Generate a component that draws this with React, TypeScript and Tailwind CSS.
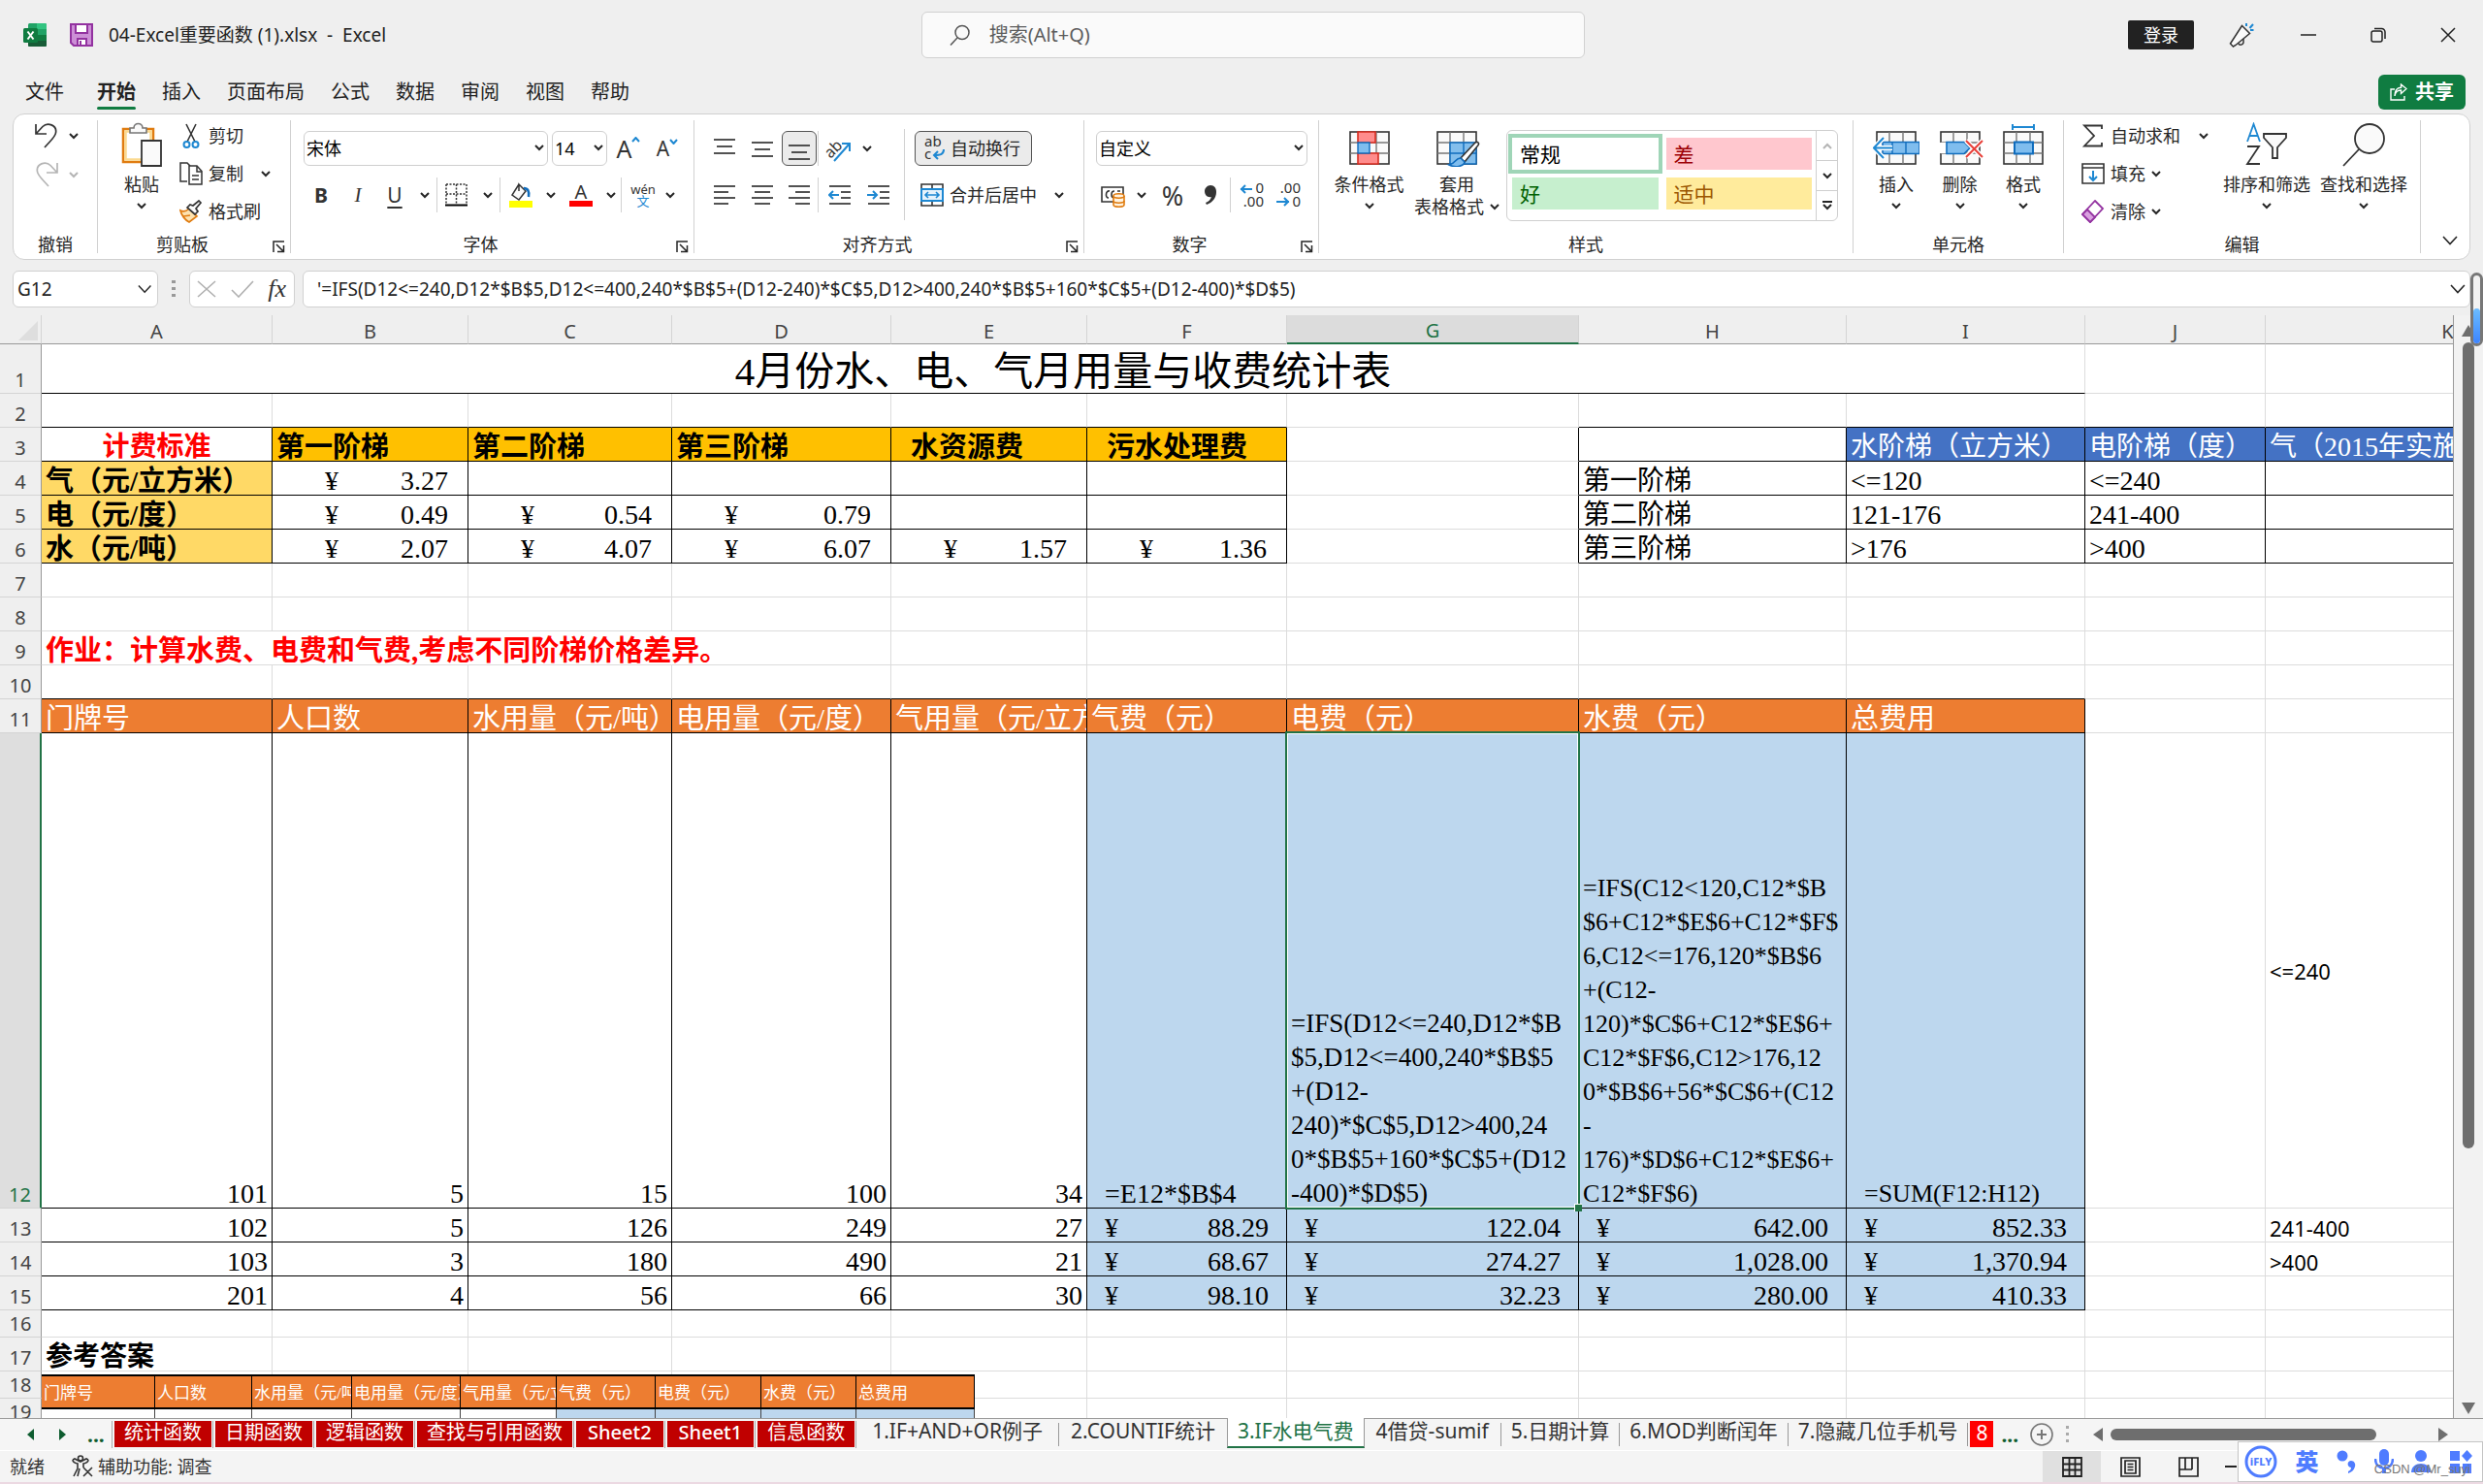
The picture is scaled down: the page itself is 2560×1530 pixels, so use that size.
import React from "react";

const UI = "font-['Noto_Sans','Noto_Sans_CJK_SC',sans-serif]";
const SONG = "font-['Liberation_Serif','Noto_Sans_CJK_SC',serif]";

/* ---------- small shared pieces ---------- */

function Chevron({ big = false, color = "#262626" }: any) {
    return big ? (
        <svg width="16" height="10" viewBox="0 0 16 10" fill="none" stroke={color} strokeWidth="1.6">
            <path d="M1 1l7 7.5L15 1" />
        </svg>
    ) : (
        <svg width="10" height="7" viewBox="0 0 10 7" fill="none" stroke={color} strokeWidth="2">
            <path d="M1 1l4 4 4-4" />
        </svg>
    );
}

function Btn({ label, className = "", children }: any) {
    return (
        <button type="button" aria-label={label} className={`flex items-center justify-center shrink-0 ${className}`}>
            {children}
        </button>
    );
}

function Sep() {
    return <span className="w-px h-9 bg-[#d1d1d1] shrink-0" />;
}

function Select({ label, value, className }: any) {
    return (
        <label className={`relative h-9 shrink-0 ${className}`}>
            <select
                aria-label={label}
                className="appearance-none w-full h-full bg-white border border-[#cfcfcf] rounded-md pl-0.5 text-lg leading-6 text-black"
            >
                <option>{value}</option>
            </select>
            <span className="absolute right-1 top-3.5 pointer-events-none">
                <Chevron />
            </span>
        </label>
    );
}

function Group({ name, launcher = false, className, children }: any) {
    return (
        <section className={`flex flex-col shrink-0 border-r border-[#d1d1d1] ${className}`}>
            <div className="flex-1">{children}</div>
            <div className="flex items-center h-[18px] leading-[18px]">
                <span className="flex-1 text-center">{name}</span>
                {launcher && (
                    <Btn label={`${name}设置`} className="w-6 pt-1">
                        <svg width="13" height="13" viewBox="0 0 13 13" fill="none" stroke="#262626" strokeWidth="1.5">
                            <path d="M1 12V1h11M4 4l7 7M11.5 5v6.5H5" />
                        </svg>
                    </Btn>
                )}
            </div>
        </section>
    );
}

function BigBtn({ icon, text, className }: any) {
    return (
        <button type="button" className={`flex flex-col items-center shrink-0 ${className}`}>
            <span className="h-[52px] flex items-end pb-1">{icon}</span>
            <span className="leading-7 whitespace-nowrap">{text}</span>
            <span className="h-4 flex items-center">
                <Chevron />
            </span>
        </button>
    );
}

// rows of horizontal strokes, each one given as [x1, x2]
function Lines({ rows, gap = 6, top = 1, children }: any) {
    return (
        <svg width="24" height="24" viewBox="0 0 24 24" fill="none" stroke="#333" strokeWidth="1.7">
            {rows.map((r: number[], i: number) => (
                <path key={i} d={`M${r[0]} ${top + i * gap}H${r[1]}`} />
            ))}
            {children}
        </svg>
    );
}

function GridIcon({ children }: any) {
    return (
        <svg width="48" height="44" viewBox="0 0 48 44" fill="none">
            <rect x="4" y="8" width="40" height="33" fill="#fafafa" stroke="#333" strokeWidth="1.6" />
            <path d="M17 8v33M31 8v33M4 19h40M4 30h40" stroke="#777" strokeWidth="1.4" />
            {children}
        </svg>
    );
}

/* ---------- title bar and ribbon ---------- */

function TitleBar() {
    return (
        <header className="flex h-[72px] items-center shrink-0 pl-6 text-[19px]">
            <div className="flex items-center flex-1">
                <svg width="24" height="24" viewBox="0 0 24 24">
                    <rect x="5" y="0" width="19" height="24" rx="1.5" fill="#21a366" />
                    <path d="M14 0h8.500A1.500 1.500 0 0 1 24 1.500V6H14z" fill="#33c481" />
                    <path d="M14 12h10v6H14z" fill="#107c41" />
                    <path d="M5 12h9v6H5z" fill="#185c37" />
                    <path d="M5 18h19v4.500A1.500 1.500 0 0 1 22.500 24h-16A1.500 1.500 0 0 1 5 22.500z" fill="#185c37" />
                    <rect x="0" y="5" width="15" height="15" rx="1.500" fill="#107c41" />
                    <path d="M4.500 8.500l6 8M10.500 8.500l-6 8" stroke="#fff" strokeWidth="2" />
                </svg>
                <svg className="ml-6" width="24" height="24" viewBox="0 0 24 24" stroke="#9332a0" strokeWidth="2">
                    <path d="M1 1h22v22H4l-3-3z" fill="#cc8fd6" />
                    <path d="M6 1h12v9H6zM8 16h9v7H8z" fill="#fff" />
                    <path d="M11 18v5" />
                </svg>
                <h1 className="ml-4 whitespace-pre text-[#222]">{"04-Excel重要函数 (1).xlsx  -  Excel"}</h1>
            </div>
            <label className="flex items-center w-[27%] h-12 bg-[#fafafa] border border-[#d1d1d1] rounded-md pl-7 gap-5">
                <svg width="21" height="23" viewBox="0 0 21 23" fill="none" stroke="#555" strokeWidth="1.500">
                    <circle cx="13" cy="8.500" r="7" />
                    <path d="M8 14L1 21.500" />
                </svg>
                <input
                    aria-label="搜索"
                    placeholder="搜索(Alt+Q)"
                    className="flex-1 bg-transparent text-xl placeholder:text-[#5c5c5c] outline-none"
                />
            </label>
            <div className="flex items-center justify-end flex-1">
                <button type="button" className="h-[30px] w-[68px] bg-[#222] text-white rounded-xs text-lg leading-none">
                    登录
                </button>
                <Btn label="即将推出" className="ml-9">
                    <svg width="26" height="26" viewBox="0 0 26 26" fill="none" stroke="#333" strokeWidth="1.500">
                        <path d="M13.500 3.500l8 8L7 23.500 4.500 25 1.500 22z" fill="#fafafa" />
                        <path d="M10 21.500c0 2 4 3 5-.5v-4" />
                        <path d="M18 1v3M25 2l-3.500 4M22 8h3.500" stroke="#1e88d2" strokeWidth="2" />
                    </svg>
                </Btn>
                <Btn label="最小化" className="ml-12">
                    <svg width="16" height="16" viewBox="0 0 16 16" stroke="#222" strokeWidth="1.500"><path d="M0 8h16" /></svg>
                </Btn>
                <Btn label="还原" className="ml-14">
                    <svg width="16" height="16" viewBox="0 0 16 16" fill="none" stroke="#222" strokeWidth="1.500">
                        <rect x="1" y="4" width="11" height="11" rx="2" />
                        <path d="M4 1.500h7.500a3.500 3.500 0 0 1 3.500 3.500V12" />
                    </svg>
                </Btn>
                <Btn label="关闭" className="ml-14 mr-7">
                    <svg width="16" height="16" viewBox="0 0 16 16" stroke="#222" strokeWidth="1.500"><path d="M1 1l14 14M15 1L1 15" /></svg>
                </Btn>
            </div>
        </header>
    );
}

const menu = ["插入", "页面布局", "公式", "数据", "审阅", "视图", "帮助"];

function MenuBar() {
    return (
        <nav className="flex items-center h-[45px] shrink-0 pl-[26px] pr-[18px] text-xl text-[#222]">
            <a href="#file" className="mr-[34px]">文件</a>
            <a href="#home" className="relative font-bold mr-[27px]">
                开始
                <span className="absolute left-0 right-0 -bottom-1 h-[3px] rounded bg-[#107c41]" />
            </a>
            {menu.map((m) => (
                <a key={m} href={`#${m}`} className="mr-[27px]">{m}</a>
            ))}
            <button type="button" className="ml-auto flex items-center gap-2 h-9 bg-[#107c41] text-white font-bold rounded-md px-3">
                <svg width="18" height="18" viewBox="0 0 18 18" fill="none" stroke="#fff" strokeWidth="1.400">
                    <path d="M5 6H1v11h14v-4" />
                    <path d="M5 13c.5-4 2.500-6 6.500-6V10.500L17 5.500 11.500 1v3.200C7 4.200 5 8 5 13z" />
                </svg>
                共享
            </button>
        </nav>
    );
}

function UndoGroup() {
    return (
        <Group name="撤销" className="w-[87px]">
            <div className="flex flex-col gap-4 pl-[21px]">
                <div className="flex items-center h-6 mt-1 gap-2.5">
                    <Btn label="撤消">
                        <svg width="26" height="26" viewBox="0 0 26 26" fill="none" stroke="#333" strokeWidth="1.700">
                            <path d="M2 1v10h11M2 11l7-7.500C14-1.500 24 2 22.500 10 22 14 18 17 11 25" />
                        </svg>
                    </Btn>
                    <Chevron />
                </div>
                <div className="flex items-center h-6 gap-2.5">
                    <Btn label="恢复">
                        <svg width="26" height="26" viewBox="0 0 26 26" fill="none" stroke="#b5b5b5" strokeWidth="1.700">
                            <path d="M24 1v10H13M24 11l-7-7.500C12-1.500 2 2 3.500 10 4 14 8 17 15 25" />
                        </svg>
                    </Btn>
                    <Chevron color="#b5b5b5" />
                </div>
            </div>
        </Group>
    );
}

function ClipboardGroup() {
    return (
        <Group name="剪贴板" launcher className="w-[199px]">
            <div className="flex pl-[22px]">
                <BigBtn
                    className="w-[46px]"
                    text="粘贴"
                    icon={
                        <svg width="42" height="46" viewBox="0 0 42 46" fill="none">
                            <path d="M2 7h31v34H2z" fill="#fff" stroke="#e07c10" strokeWidth="2.500" />
                            <path d="M4.500 9.500h26v29h-26z" stroke="#fbd98f" strokeWidth="2.500" />
                            <path d="M9 11V6h4c0-6 9-6 9 0h4v5z" fill="#fafafa" stroke="#777" strokeWidth="1.600" />
                            <path d="M21 19h20v26H21z" fill="#fafafa" stroke="#333" strokeWidth="1.800" />
                        </svg>
                    }
                />
                <div className="flex flex-col pl-4 gap-[11px] pt-0.5">
                    <button type="button" className="flex items-center h-7 gap-1.5">
                        <svg width="24" height="26" viewBox="0 0 24 26" fill="none" stroke="#333" strokeWidth="1.600">
                            <path d="M7 1l9 18M17 1L8 19" />
                            <g stroke="#1e88d2" strokeWidth="2">
                                <circle cx="7.500" cy="22" r="3" />
                                <circle cx="16.500" cy="22" r="3" />
                            </g>
                        </svg>
                        剪切
                    </button>
                    <div className="flex items-center gap-[18px]">
                        <button type="button" className="flex items-center h-7 gap-1.5">
                            <svg width="24" height="24" viewBox="0 0 24 24" fill="none" stroke="#333" strokeWidth="1.500">
                                <path d="M8 20H1V1h7l3 3" />
                                <path d="M10 4h8l5 5.500V23H10z" fill="#fff" />
                                <path d="M18 4v6h5M13 14h7M13 18h7" />
                            </svg>
                            复制
                        </button>
                        <Chevron />
                    </div>
                    <button type="button" className="flex items-center h-7 gap-1.5">
                        <svg width="24" height="24" viewBox="0 0 24 24" fill="none" strokeWidth="1.700">
                            <path d="M1 11c4 2 7 0 9-2l8 8-8 6c-4-2-8-7-9-12z" fill="#fde3b0" stroke="#e07c10" />
                            <path d="M4 17l7-1" stroke="#e07c10" />
                            <path d="M8 8l3-3 3 1 6-5 2 2-5 6 2 3-3 3z" fill="#fafafa" stroke="#333" />
                        </svg>
                        格式刷
                    </button>
                </div>
            </div>
        </Group>
    );
}

function FontGroup() {
    return (
        <Group name="字体" launcher className="w-[416px]">
            <div className="flex items-center gap-1 pt-[11px] pl-[13px]">
                <Select label="字体" value="宋体" className="w-[252px]" />
                <Select label="字号" value="14" className="w-[57px]" />
                <Btn label="增大字号" className="w-9 text-[25px] leading-none text-[#333]">
                    A<svg className="self-start" width="9" height="6" viewBox="0 0 9 6" fill="none" stroke="#1e88d2" strokeWidth="2"><path d="M1 5l3.500-4L8 5" /></svg>
                </Btn>
                <Btn label="减小字号" className="w-9 text-[21px] leading-none text-[#333]">
                    A<svg className="self-start" width="9" height="6" viewBox="0 0 9 6" fill="none" stroke="#1e88d2" strokeWidth="2"><path d="M1 1l3.500 4L8 1" /></svg>
                </Btn>
            </div>
            <div className="flex items-center h-9 mt-3 pl-3 text-[21px] text-[#333]">
                <Btn label="加粗" className="w-[38px] font-bold">B</Btn>
                <Btn label="倾斜" className="w-[38px] italic font-['Liberation_Serif',serif]">I</Btn>
                <Btn label="下划线" className="w-[38px] underline underline-offset-4">U</Btn>
                <Btn label="下划线样式" className="w-6"><Chevron /></Btn>
                <Sep />
                <Btn label="边框" className="w-10">
                    <svg width="24" height="24" viewBox="0 0 24 24" fill="none" stroke="#333" strokeWidth="1.500">
                        <path d="M1 1h21v20M1 1v20M11.500 1v20M1 11h21" strokeDasharray="2 1.500" />
                        <path d="M0 22.500h23" strokeWidth="2" stroke="#000" />
                    </svg>
                </Btn>
                <Btn label="边框样式" className="w-6"><Chevron /></Btn>
                <Sep />
                <Btn label="填充颜色" className="w-[42px]">
                    <svg width="26" height="26" viewBox="0 0 26 26" fill="none">
                        <path d="M11 2L4 13l7 5 7-9-7-7v7" fill="#fafafa" stroke="#333" strokeWidth="1.500" />
                        <path d="M16 6c4 0 6 3 5 9" stroke="#0f6cbd" strokeWidth="2.500" />
                        <path d="M1 19h24v7H1z" fill="#ff0" />
                    </svg>
                </Btn>
                <Btn label="填充颜色选项" className="w-5"><Chevron /></Btn>
                <Btn label="字体颜色" className="w-[42px] flex-col">
                    <span className="text-xl leading-[18px]">A</span>
                    <span className="w-6 h-1.5 bg-[#f00]" />
                </Btn>
                <Btn label="字体颜色选项" className="w-5"><Chevron /></Btn>
                <Sep />
                <Btn label="拼音" className="w-11 flex-col">
                    <span className="text-[13px] leading-3">wén</span>
                    <span className="text-[13px] leading-3 text-[#1e88d2]">文</span>
                </Btn>
                <Btn label="拼音选项" className="w-3"><Chevron /></Btn>
            </div>
        </Group>
    );
}

function AlignGroup() {
    return (
        <Group name="对齐方式" launcher className="w-[402px]">
            <div className="flex pt-[9px]">
                <div className="w-[217px] border-r border-[#d1d1d1] h-[94px] pl-[11px] pt-0.5">
                    <div className="flex items-center">
                        <Btn label="顶端对齐" className="w-[39px] h-9"><Lines rows={[[1, 23], [4, 20], [1, 23]]} gap={7} top={3} /></Btn>
                        <Btn label="垂直居中" className="w-[39px] h-9"><Lines rows={[[1, 23], [4, 20], [1, 23]]} gap={7} top={6} /></Btn>
                        <Btn label="底端对齐" className="w-9 h-9 mx-px rounded-md border border-[#555] bg-[#ebebeb]">
                            <Lines rows={[[1, 23], [4, 20], [1, 23]]} gap={7} top={9} />
                        </Btn>
                        <Sep />
                        <Btn label="方向" className="w-[42px]">
                            <svg width="28" height="28" viewBox="0 0 28 28" fill="none" stroke="#1e88d2" strokeWidth="2">
                                <text x="1" y="21" transform="rotate(-45 8 18)" fontSize="16" fill="#333" stroke="none">ab</text>
                                <path d="M9 27L25 9M17 9h8v8" />
                            </svg>
                        </Btn>
                        <Btn label="方向选项" className="w-4"><Chevron /></Btn>
                    </div>
                    <div className="flex items-center mt-3">
                        <Btn label="左对齐" className="w-[39px] h-9"><Lines rows={[[1, 23], [1, 16], [1, 23], [1, 16]]} top={3} /></Btn>
                        <Btn label="居中" className="w-[39px] h-9"><Lines rows={[[1, 23], [4, 20], [1, 23], [4, 20]]} top={3} /></Btn>
                        <Btn label="右对齐" className="w-[38px] h-9"><Lines rows={[[1, 23], [8, 23], [1, 23], [8, 23]]} top={3} /></Btn>
                        <Sep />
                        <Btn label="减少缩进" className="w-11 h-9">
                            <Lines rows={[[1, 23], [13, 23], [13, 23], [1, 23]]} top={3}>
                                <path d="M1 12h10M5 8l-4 4 4 4" stroke="#1e88d2" strokeWidth="2" />
                            </Lines>
                        </Btn>
                        <Btn label="增加缩进" className="w-9 h-9">
                            <Lines rows={[[1, 23], [13, 23], [13, 23], [1, 23]]} top={3}>
                                <path d="M0 12h10M6 8l4 4-4 4" stroke="#1e88d2" strokeWidth="2" />
                            </Lines>
                        </Btn>
                    </div>
                </div>
                <div className="pl-2.5 pt-0.5">
                    <button type="button" className="flex items-center h-9 w-[121px] pl-2 gap-1 rounded-md border border-[#555] bg-[#ebebeb] whitespace-nowrap">
                        <svg width="24" height="28" viewBox="0 0 24 28" fill="none" stroke="#1e88d2" strokeWidth="2">
                            <text x="1" y="12" fontSize="15" fill="#333" stroke="none">ab</text>
                            <text x="1" y="25" fontSize="15" fill="#333" stroke="none">c</text>
                            <path d="M21 15c0 5-3 6-10 6M15 17l-4 4 4 4" />
                        </svg>
                        自动换行
                    </button>
                    <div className="flex items-center mt-3 gap-[18px]">
                        <button type="button" className="flex items-center h-9 gap-1.5 pl-1.5 whitespace-nowrap">
                            <svg width="24" height="24" viewBox="0 0 24 24" fill="none" stroke="#333" strokeWidth="1.600">
                                <path d="M1 1h22v22H1zM12 1v22" />
                                <path d="M1 6h22v12H1z" fill="#e6f2fb" stroke="#1e88d2" strokeWidth="2" />
                                <path d="M5 12h14M8 9l-3 3 3 3M16 9l3 3-3 3" stroke="#1e88d2" />
                            </svg>
                            合并后居中
                        </button>
                        <Chevron />
                    </div>
                </div>
            </div>
        </Group>
    );
}

function DecimalIcon({ inc = false }: any) {
    return (
        <svg width="26" height="28" viewBox="0 0 26 28" fill="none" stroke="#1e88d2" strokeWidth="2">
            <g fontSize="15" fill="#333" stroke="none" textAnchor="end">
                <text x="25" y="12">{inc ? "0" : ".00"}</text>
                <text x="25" y="26">{inc ? ".00" : "0"}</text>
            </g>
            {inc ? <path d="M1 8h12M6 4L2 8l4 4" /> : <path d="M0 21h13M8 17l4 4-4 4" />}
        </svg>
    );
}

function NumberGroup() {
    return (
        <Group name="数字" launcher className="w-[242px]">
            <div className="pl-3 pt-[11px] flex">
                <Select label="数字格式" value="自定义" className="w-[218px]" />
            </div>
            <div className="flex items-center h-9 mt-3 pl-3">
                <Btn label="会计格式" className="w-9">
                    <svg width="26" height="26" viewBox="0 0 26 26" fill="none" stroke="#333" strokeWidth="1.600">
                        <path d="M1 5h22v15H1z" />
                        <path d="M9 9c-4-1-5 7-1 7M14 9c-4 0-4 7 0 7M17 9h3" />
                        <path d="M13 14c0-3 11-3 11 0v9c0 3-11 3-11 0z" fill="#fff3e0" stroke="#e07c10" />
                        <path d="M13 14c0 3 11 3 11 0M13 19c0 3 11 3 11 0" stroke="#e07c10" />
                    </svg>
                </Btn>
                <Btn label="会计格式选项" className="w-[22px]"><Chevron /></Btn>
                <Btn label="百分比" className="w-[42px] text-[27px] leading-none text-[#333]">%</Btn>
                <Btn label="千位分隔" className="w-9">
                    <svg width="14" height="24" viewBox="0 0 14 24" fill="#333"><path d="M7 2c4 0 6 3 6 7 0 6-4 11-10 13l-1-2c3-1 5-3 6-6-4 1-7-2-7-6 0-3 3-6 6-6z" /></svg>
                </Btn>
                <span className="w-0.5" />
                <Sep />
                <Btn label="增加小数位数" className="w-11"><DecimalIcon inc /></Btn>
                <Btn label="减少小数位数" className="w-8"><DecimalIcon /></Btn>
            </div>
        </Group>
    );
}

function StylesGroup() {
    return (
        <Group name="样式" className="w-[551px]">
            <div className="flex">
                <BigBtn
                    className="w-[103px]"
                    text="条件格式"
                    icon={
                        <GridIcon>
                            <path d="M12 8h18v11H12zM12 30h21v11H12z" fill="#ff8c8c" stroke="#d92c20" strokeWidth="1.600" />
                            <path d="M12 19h12v11H12z" fill="#7fbdee" stroke="#0f6cbd" strokeWidth="1.400" />
                        </GridIcon>
                    }
                />
                <button type="button" className="flex flex-col items-center w-[78px]">
                    <span className="h-[52px] flex items-end pb-1">
                        <GridIcon>
                            <path d="M17 19h27v22H17z" fill="#83beec" stroke="#0f6cbd" strokeWidth="1.400" />
                            <path d="M31 19v22M17 30h27" stroke="#0f6cbd" strokeWidth="1.400" />
                            <path d="M46 19c-1-1-3 0-4 1L28 35l4 4 13-16c1-1 2-3 1-4z" fill="#fff" stroke="#333" strokeWidth="1.600" />
                            <path d="M28 35c-6 0-5 6-12 7 6 3 15 2 16-3z" fill="#7fbdee" stroke="#0f6cbd" strokeWidth="1.600" />
                        </GridIcon>
                    </span>
                    <span className="leading-7">套用</span>
                    <span className="flex items-center gap-1.5 leading-[18px] whitespace-nowrap">表格格式 <Chevron /></span>
                </button>
                <div className="flex mt-2.5 ml-3 h-[94px] w-[342px] border border-[#cfcfcf] rounded-md text-[21px] leading-8">
                    <div className="flex-1 grid grid-cols-2 pt-[3px] pl-px content-start">
                        <button type="button" className="h-[41px] border-4 border-[#9fd5b7] text-left pl-2 text-black">常规</button>
                        <button type="button" className="h-[33px] m-1 bg-[#ffc7ce] text-[#9c0006] text-left pl-2">差</button>
                        <button type="button" className="h-[33px] m-1 bg-[#c6efce] text-[#006100] text-left pl-2">好</button>
                        <button type="button" className="h-[33px] m-1 bg-[#ffeb9c] text-[#9c5700] text-left pl-2">适中</button>
                    </div>
                    <div className="w-[22px] flex flex-col border-l border-[#cfcfcf] divide-y divide-[#cfcfcf]">
                        <Btn label="上一行" className="flex-1">
                            <svg width="10" height="7" viewBox="0 0 10 7" fill="none" stroke="#b5b5b5" strokeWidth="2"><path d="M1 6l4-4 4 4" /></svg>
                        </Btn>
                        <Btn label="下一行" className="flex-1"><Chevron /></Btn>
                        <Btn label="其他" className="flex-1">
                            <svg width="10" height="10" viewBox="0 0 10 10" fill="none" stroke="#262626" strokeWidth="2"><path d="M0 1h10M1 4l4 4 4-4" /></svg>
                        </Btn>
                    </div>
                </div>
            </div>
        </Group>
    );
}

function CellsGroup() {
    return (
        <Group name="单元格" className="w-[217px]">
            <div className="flex pl-[11px]">
                <BigBtn
                    className="w-[66px]"
                    text="插入"
                    icon={
                        <GridIcon>
                            <path d="M10 18.500h38v12H10z" fill="#7fbdee" stroke="#0f6cbd" strokeWidth="1.600" />
                            <path d="M20 18.500v12M34 18.500v12" stroke="#0f6cbd" strokeWidth="1.400" />
                            <path d="M0 24.500h20M11 14L1 24.500 11 35" stroke="#fff" strokeWidth="5" />
                            <path d="M1 24.500h19M11 14L1 24.500 11 35" stroke="#1e88d2" strokeWidth="2" />
                        </GridIcon>
                    }
                />
                <BigBtn
                    className="w-[65px]"
                    text="删除"
                    icon={
                        <GridIcon>
                            <path d="M0 19h10v11H0z" fill="#fff" />
                            <path d="M10 18.500h18l6 6-6 6H10z" fill="#7fbdee" stroke="#0f6cbd" strokeWidth="1.600" />
                            <path d="M30 17l17 17M47 17L30 34" stroke="#fff" strokeWidth="5" />
                            <path d="M30 17l17 17M47 17L30 34" stroke="#e8403a" strokeWidth="2" />
                        </GridIcon>
                    }
                />
                <BigBtn
                    className="w-[66px]"
                    text="格式"
                    icon={
                        <GridIcon>
                            <path d="M15 18.500h19v12H15z" fill="#7fbdee" stroke="#0f6cbd" strokeWidth="2" />
                            <path d="M13 3h22M13 0v6M35 0v6" stroke="#1e88d2" strokeWidth="2" />
                        </GridIcon>
                    }
                />
            </div>
        </Group>
    );
}

function EditGroup() {
    return (
        <Group name="编辑" className="w-[368px]">
            <div className="flex">
                <div className="flex flex-col gap-[11px] pt-0.5 pl-[18px] w-[149px]">
                    <div className="flex items-center justify-between">
                        <button type="button" className="flex items-center h-7 gap-1.5">
                            <svg width="24" height="24" viewBox="0 0 24 24" fill="none" stroke="#333" strokeWidth="1.800">
                                <path d="M21 5V1.500H3L13 12 3 22.500h18V19" />
                            </svg>
                            自动求和
                        </button>
                        <Chevron />
                    </div>
                    <button type="button" className="flex items-center h-7 gap-1.5">
                        <svg width="24" height="24" viewBox="0 0 24 24" fill="none" stroke="#333" strokeWidth="1.600">
                            <path d="M1 2h22v20H1zM1 6h22" />
                            <path d="M12 9v10M8 15l4 4 4-4" stroke="#1e88d2" strokeWidth="2" />
                        </svg>
                        填充
                        <Chevron />
                    </button>
                    <button type="button" className="flex items-center h-7 gap-1.5">
                        <svg width="24" height="24" viewBox="0 0 24 24" fill="none" stroke="#9332a0" strokeWidth="1.800">
                            <path d="M14 1l8 8L9 23l-8-8z" fill="#fff" />
                            <path d="M6 10l8 8-5 5-8-8z" fill="#d9a0e0" />
                        </svg>
                        清除
                        <Chevron />
                    </button>
                </div>
                <BigBtn
                    className="w-[108px] ml-1.5"
                    text="排序和筛选"
                    icon={
                        <svg width="44" height="46" viewBox="0 0 44 46" fill="none" strokeWidth="1.800">
                            <path d="M2 20L8.500 2 15 20M4 14h9" stroke="#1e88d2" />
                            <path d="M2 25h12L2 43h13" stroke="#333" />
                            <path d="M19 12h23v4L33 26v11h-5V26L19 16z" fill="#fafafa" stroke="#333" />
                        </svg>
                    }
                />
                <BigBtn
                    className="w-[92px]"
                    text="查找和选择"
                    icon={
                        <svg width="46" height="46" viewBox="0 0 46 46" fill="none" stroke="#333" strokeWidth="1.800">
                            <circle cx="29" cy="17" r="15" fill="#fafafa" />
                            <path d="M18 28L2 45" />
                        </svg>
                    }
                />
            </div>
        </Group>
    );
}

function Ribbon() {
    return (
        <div className="flex mx-[13px] h-[151px] shrink-0 bg-white border border-[#d1d1d1] rounded-xl py-1.5 text-lg leading-6 text-[#262626]">
            <UndoGroup />
            <ClipboardGroup />
            <FontGroup />
            <AlignGroup />
            <NumberGroup />
            <StylesGroup />
            <CellsGroup />
            <EditGroup />
            <div className="flex-1 flex items-end justify-center pb-2 pl-2.5">
                <Btn label="折叠功能区"><Chevron big /></Btn>
            </div>
        </div>
    );
}

function FormulaBar() {
    const box = "bg-white border border-[#d1d1d1] rounded-md h-[38px] flex items-center";
    return (
        <div className="flex items-center shrink-0 pt-[11px] pb-2 px-[13px] text-[19px] text-[#222]">
            <label className={`${box} w-[150px] pl-1 pr-1.5 shrink-0`}>
                <input aria-label="名称框" defaultValue="G12" className="w-full outline-none" />
                <Chevron big />
            </label>
            <svg className="mx-3.5" width="4" height="20" viewBox="0 0 4 20" fill="#999">
                <path d="M0 1h4v3H0zM0 8h4v3H0zM0 15h4v3H0z" />
            </svg>
            <div className={`${box} w-[109px] pl-[7px] justify-between pr-2 shrink-0`}>
                <Btn label="取消">
                    <svg width="20" height="18" viewBox="0 0 20 18" stroke="#b0b0b0" strokeWidth="1.600"><path d="M1 1l18 16M19 1L1 17" /></svg>
                </Btn>
                <Btn label="输入">
                    <svg width="24" height="18" viewBox="0 0 24 18" fill="none" stroke="#b0b0b0" strokeWidth="1.600"><path d="M1 10l7 7L23 1" /></svg>
                </Btn>
                <Btn label="插入函数" className="font-['Liberation_Serif',serif] italic text-[26px] leading-none text-[#333]">fx</Btn>
            </div>
            <label className={`${box} flex-1 ml-2 pl-3.5 pr-1`}>
                <input
                    aria-label="编辑栏"
                    className="w-full outline-none"
                    defaultValue="'=IFS(D12<=240,D12*$B$5,D12<=400,240*$B$5+(D12-240)*$C$5,D12>400,240*$B$5+160*$C$5+(D12-400)*$D$5)"
                />
                <Chevron big />
            </label>
        </div>
    );
}

/* ---------- sheet ---------- */

// t: text, y: currency value, s: colspan, c: extra classes
type Cell = { t?: any; y?: string; s?: number; c?: string; sel?: boolean };

const BR = "border-r-black";
const BB = "border-b-black";
const BX = "border-r-black border-b-black";
const gold = `${BX} bg-[#ffc000] font-bold text-[29px]`;
const sand = `${BX} bg-[#ffd966] font-bold text-[29px]`;
const navy = `${BX} bg-[#4472c4] text-white`;
const orange = `${BX} bg-[#ed7d31] text-white text-[29px]`;
const sky = `${BX} bg-[#bdd7ee]`;
const num = `${BX} text-right`;
const wide = "pl-[54px] pr-5";
const sans = `${UI} text-[22px]`;
const blank = (n: number, c = ""): Cell[] => Array.from({ length: n }, () => ({ c }));

const priceRow = (name: string, prices: string[], h: Cell[]): Cell[] => [
    { t: name, c: sand },
    ...[0, 1, 2, 3, 4].map((i) => (prices[i] ? { y: prices[i], c: `${BX} ${wide}` } : { c: BX })),
    { c: BR },
    ...h,
];

const billRow = (n: string[], money: string[], k: string): Cell[] => [
    ...n.map((t) => ({ t, c: num })),
    ...money.map((y) => ({ y, c: `${sky} pl-[18px] pr-[18px]` })),
    {},
    { t: k, c: sans },
];

const G12 = ["=IFS(D12<=240,D12*$B", "$5,D12<=400,240*$B$5", "+(D12-", "240)*$C$5,D12>400,24", "0*$B$5+160*$C$5+(D12", "-400)*$D$5)"];
const H12 = [
    "=IFS(C12<120,C12*$B", "$6+C12*$E$6+C12*$F$", "6,C12<=176,120*$B$6", "+(C12-", "120)*$C$6+C12*$E$6+",
    "C12*$F$6,C12>176,12", "0*$B$6+56*$C$6+(C12", "-", "176)*$D$6+C12*$E$6+", "C12*$F$6)",
];
const lines = (a: string[], size: string) => (
    <div className={`-mb-[3px] leading-[35px] ${size}`}>
        {a.map((l, i) => <div key={i}>{l}</div>)}
    </div>
);

const rows: { h: string; cells: Cell[] }[] = [
    { h: "h-[51px]", cells: [{ t: "4月份水、电、气月用量与收费统计表", s: 9, c: `${BB} text-center text-[41px] leading-[44px]` }, ...blank(2)] },
    { h: "h-[35px]", cells: [...blank(6, BB), {}, ...blank(4, BB)] },
    {
        h: "h-[35px]",
        cells: [
            { t: "计费标准", c: `${BX} text-center font-bold text-[#f00]` },
            { t: "第一阶梯", c: gold }, { t: "第二阶梯", c: gold }, { t: "第三阶梯", c: gold },
            { t: "水资源费", c: `${gold} pl-5` }, { t: "污水处理费", c: `${gold} pl-5` },
            { c: BR }, { c: BX },
            { t: "水阶梯（立方米）", c: navy }, { t: "电阶梯（度）", c: navy }, { t: "气（2015年实施）", c: navy },
        ],
    },
    { h: "h-[35px]", cells: priceRow("气（元/立方米）", ["3.27"], [{ t: "第一阶梯", c: BX }, { t: "<=120", c: BX }, { t: "<=240", c: BX }, { c: BX }]) },
    { h: "h-[35px]", cells: priceRow("电（元/度）", ["0.49", "0.54", "0.79"], [{ t: "第二阶梯", c: BX }, { t: "121-176", c: BX }, { t: "241-400", c: BX }, { c: BX }]) },
    { h: "h-[35px]", cells: priceRow("水（元/吨）", ["2.07", "4.07", "6.07", "1.57", "1.36"], [{ t: "第三阶梯", c: BX }, { t: ">176", c: BX }, { t: ">400", c: BX }, { c: BX }]) },
    { h: "h-[35px]", cells: blank(11) },
    { h: "h-[35px]", cells: blank(11) },
    { h: "h-[35px]", cells: [{ t: "作业：计算水费、电费和气费,考虑不同阶梯价格差异。", s: 4, c: "font-bold text-[#f00] text-[29px]" }, ...blank(7)] },
    { h: "h-[35px]", cells: [...blank(9, BB), ...blank(2)] },
    {
        h: "h-[35px]",
        cells: [
            ...["门牌号", "人口数", "水用量（元/吨）", "电用量（元/度）", "气用量（元/立方米）", "气费（元）", "电费（元）", "水费（元）", "总费用"].map((t) => ({ t, c: orange })),
            ...blank(2),
        ],
    },
    {
        h: "h-[490px]",
        cells: [
            ...["101", "5", "15", "100", "34"].map((t) => ({ t, c: num })),
            { t: "=E12*$B$4", c: `${sky} pl-[18px]` },
            { t: lines(G12, "text-[27px]"), c: sky, sel: true },
            { t: lines(H12, "text-[26px]"), c: sky },
            { t: "=SUM(F12:H12)", c: `${sky} pl-[18px] text-[26px]` },
            {},
            { t: "<=240", c: `${sans} align-middle` },
        ],
    },
    { h: "h-[35px]", cells: billRow(["102", "5", "126", "249", "27"], ["88.29", "122.04", "642.00", "852.33"], "241-400") },
    { h: "h-[35px]", cells: billRow(["103", "3", "180", "490", "21"], ["68.67", "274.27", "1,028.00", "1,370.94"], ">400") },
    { h: "h-[35px]", cells: billRow(["201", "4", "56", "66", "30"], ["98.10", "32.23", "280.00", "410.33"], "") },
    { h: "h-[28px]", cells: blank(11) },
    { h: "h-[35px]", cells: [{ t: "参考答案", c: "font-bold" }, ...blank(10)] },
    { h: "h-[28px]", cells: blank(11) },
    { h: "h-[28px]", cells: blank(11) },
];

const cols = [
    ["A", "w-[238px]"], ["B", "w-[202px]"], ["C", "w-[210px]"], ["D", "w-[226px]"], ["E", "w-[202px]"], ["F", "w-[206px]"],
    ["G", "w-[301px]"], ["H", "w-[276px]"], ["I", "w-[246px]"], ["J", "w-[186px]"], ["K", "w-[376px]"],
];

const answers = [
    ["门牌号", "w-[117px]"], ["人口数", "w-[100px]"], ["水用量（元/吨）", "w-[103px]"], ["电用量（元/度）", "w-[112px]"], ["气用量（元/立方米）", "w-[99px]"],
    ["气费（元）", "w-[102px]"], ["电费（元）", "w-[109px]"], ["水费（元）", "w-[98px]"], ["总费用", "w-[122px]"],
];

// pasted picture of the answer table, floats above rows 18 and 19
function AnswerPicture() {
    return (
        <table className="absolute left-0 top-[3px] z-10 table-fixed w-0 border-separate border-spacing-0 text-[17px] leading-8">
            <tbody>
                <tr className="h-9">
                    {answers.map(([t, w]) => (
                        <td key={t} className={`${w} p-0 pl-0.5 pt-1 leading-7 border-y-2 border-r border-black bg-[#ed7d31] text-white overflow-hidden whitespace-nowrap`}>{t}</td>
                    ))}
                </tr>
                <tr className="h-9">
                    {answers.map(([t], i) => (
                        <td key={t} className={`border-r border-[#444] ${i > 4 ? "bg-[#bdd7ee]" : "bg-white"}`} />
                    ))}
                </tr>
            </tbody>
        </table>
    );
}

function SheetCell({ cell, first }: { cell: Cell; first: boolean }) {
    return (
        <td
            colSpan={cell.s}
            className={`relative p-0 px-1 border-r border-b border-[#dcdcdc] align-bottom whitespace-nowrap ${cell.sel || first ? "" : "overflow-hidden"} ${cell.c || ""}`}
        >
            {cell.y ? (
                <span className="flex justify-between">
                    <span>¥</span>
                    <span>{cell.y}</span>
                </span>
            ) : (
                cell.t
            )}
            {cell.sel && (
                <span className="absolute -inset-0.5 z-10 border-2 border-[#217346] pointer-events-none">
                    <span className="absolute inset-0 border border-white" />
                    <span className="absolute -right-1 -bottom-1 size-2 bg-[#217346] border-t border-l border-white" />
                </span>
            )}
            {first && <AnswerPicture />}
        </td>
    );
}

function Sheet() {
    return (
        <div className="flex flex-1 min-h-0">
            <div className="flex-1 overflow-hidden border-r border-[#999] bg-white">
                <table className={`table-fixed w-0 border-separate border-spacing-0 text-[28px] leading-[28px] text-black ${SONG}`}>
                    <thead>
                        <tr className={`h-[30px] text-[20px] leading-6 bg-[#efefef] text-[#444] ${UI}`}>
                            <th className="w-[43px] p-0 border-b border-r border-[#999] border-r-[#d4d4d4]">
                                <svg className="ml-[19px] mt-0.5" width="20" height="20" viewBox="0 0 20 20"><path d="M20 0v20H0z" fill="#dedede" /></svg>
                            </th>
                            {cols.map(([name, w]) => (
                                <th
                                    key={name}
                                    scope="col"
                                    className={`${w} p-0 font-normal align-bottom border-r border-r-[#d4d4d4] ${name === "G" ? "bg-[#dcdcdc] text-[#217346] border-b-2 border-b-[#217346]" : "border-b border-b-[#999]"}`}
                                >
                                    {name}
                                </th>
                            ))}
                        </tr>
                    </thead>
                    <tbody>
                        {rows.map((row, i) => (
                            <tr key={i} className={row.h}>
                                <th
                                    scope="row"
                                    className={`p-0 pb-px text-[20px] leading-6 font-normal align-bottom border-b border-b-[#d4d4d4] ${UI} ${i === 11 ? "bg-[#dedede] text-[#217346] border-r-2 border-r-[#217346]" : "bg-[#efefef] text-[#444] border-r border-r-[#999]"}`}
                                >
                                    {i + 1}
                                </th>
                                {row.cells.map((cell, j) => (
                                    <SheetCell key={j} cell={cell} first={i === 17 && j === 0} />
                                ))}
                            </tr>
                        ))}
                    </tbody>
                </table>
            </div>
            <div className="w-[30px] shrink-0 flex flex-col items-center bg-[#f2f2f2] pt-2.5 pb-1">
                <svg width="14" height="12" viewBox="0 0 14 12" fill="#6e6e6e"><path d="M7 0l7 12H0z" /></svg>
                <div className="flex-1 w-3 pt-1.5">
                    <div className="h-[76%] w-3 rounded-full bg-[#6e6e6e]" />
                </div>
                <svg width="14" height="12" viewBox="0 0 14 12" fill="#6e6e6e"><path d="M7 12l7-12H0z" /></svg>
            </div>
        </div>
    );
}

/* ---------- sheet tabs and status bar ---------- */

const redTabs = ["统计函数", "日期函数", "逻辑函数", "查找与引用函数", "Sheet2", "Sheet1", "信息函数"];
const tabs = [
    ["1.IF+AND+OR例子", "px-4"], ["2.COUNTIF统计", "px-3"], ["3.IF水电气费", "px-2.5"], ["4借贷-sumif", "px-3"],
    ["5.日期计算", "px-2.5"], ["6.MOD判断闰年", "px-2.5"], ["7.隐藏几位手机号", "px-2.5"],
];

function SheetTabs() {
    return (
        <div className="flex h-[33px] shrink-0 border-t border-[#999] bg-[#f5f5f5] text-[21px] leading-6 text-[#333] whitespace-nowrap">
            <div className="flex items-center gap-[26px] pl-7 w-[116px] shrink-0 border-r border-[#aaa] my-0.5">
                <Btn label="上一张"><svg width="7" height="12" viewBox="0 0 7 12" fill="#0e5c2f"><path d="M7 0v12L0 6z" /></svg></Btn>
                <Btn label="下一张"><svg width="7" height="12" viewBox="0 0 7 12" fill="#0e5c2f"><path d="M0 0v12l7-6z" /></svg></Btn>
                <span className="text-[#0e5c2f] font-bold -ml-1">...</span>
            </div>
            {redTabs.map((t) => (
                <span key={t} className="flex border-r border-[#aaa] my-0.5 pr-px pl-0.5">
                    <button type="button" className={`h-[27px] pb-1 leading-5 text-xl bg-[#c00000] text-white ${/^S/.test(t) ? "px-3 font-medium" : "px-2.5"}`}>
                        {t}
                    </button>
                </span>
            ))}
            {tabs.map(([t, pad], i) =>
                i === 2 ? (
                    <button key={t} type="button" className={`h-[31px] -mt-px pb-1 bg-white text-[#217346] border-x border-x-[#999] border-b-2 border-b-[#217346] ${pad}`}>{t}</button>
                ) : (
                    <button key={t} type="button" className={`h-6 mt-1 pb-2 leading-4 ${pad} ${i === 1 ? "" : "border-r border-[#999]"}`}>{t}</button>
                )
            )}
            <button type="button" className="h-[27px] mt-0.5 ml-0.5 w-6 pb-1 leading-5 bg-[#f00] text-white overflow-hidden">8</button>
            <span className="text-[#0e5c2f] font-bold mt-1 ml-2">...</span>
            <Btn label="新工作表" className="ml-3">
                <svg width="24" height="24" viewBox="0 0 24 24" fill="none" stroke="#777" strokeWidth="1.600">
                    <circle cx="12" cy="12" r="11" />
                    <path d="M12 7v10M7 12h10" strokeWidth="2" />
                </svg>
            </Btn>
            <div className="ml-auto flex items-center shrink-0 gap-2 pr-9 w-[430px]">
                <svg className="mr-4" width="4" height="18" viewBox="0 0 4 18" fill="#aaa"><path d="M0 0h3v3H0zM0 7h3v3H0zM0 14h3v3H0z" /></svg>
                <svg width="10" height="14" viewBox="0 0 10 14" fill="#6e6e6e"><path d="M10 0v14L0 7z" /></svg>
                <div className="flex-1 h-3"><div className="w-[83%] h-3 rounded-full bg-[#6e6e6e]" /></div>
                <svg width="10" height="14" viewBox="0 0 10 14" fill="#6e6e6e"><path d="M0 0v14l10-7z" /></svg>
            </div>
        </div>
    );
}

function StatusBar() {
    return (
        <footer className="relative flex items-center h-[35px] shrink-0 bg-[#f4f4f4] border-t border-t-white border-b-2 border-b-[#ecd9e2] text-lg leading-6 text-[#333] pl-2.5">
            <span>就绪</span>
            <svg className="ml-[27px] mr-1" width="24" height="24" viewBox="0 0 24 24" fill="none" stroke="#333" strokeWidth="1.600">
                <circle cx="10" cy="3.500" r="2.500" />
                <path d="M2 5c0 3 5 4 5 4v5l-4 8M18 5c0 3-5 4-5 4v4M2 5l2-1 6 3 6-3 2 1M9 14l-2 8M13 13l9 9M22 13l-9 9" />
            </svg>
            <span>辅助功能: 调查</span>
            <div className="ml-auto flex h-full mr-[254px]">
                <Btn label="普通视图" className="w-[60px] bg-[#e0e0e0]">
                    <svg width="21" height="21" viewBox="0 0 21 21" fill="none" stroke="#222" strokeWidth="1.800"><path d="M1 1h19v19H1zM7.500 1v19M13.500 1v19M1 7.500h19M1 13.500h19" /></svg>
                </Btn>
                <Btn label="页面布局视图" className="w-[60px]">
                    <svg width="21" height="21" viewBox="0 0 21 21" fill="none" stroke="#222" strokeWidth="1.700"><path d="M1 1h19v19H1zM5 4h11v13H5zM7.500 7.500h6M7.500 10.500h6M7.500 13.500h6" /></svg>
                </Btn>
                <Btn label="分页预览" className="w-[60px]">
                    <svg width="21" height="21" viewBox="0 0 21 21" fill="none" stroke="#222" strokeWidth="1.700"><path d="M1 1h19v19H1zM7 1v12M14 1v12M1 13h13" /></svg>
                </Btn>
                <Btn label="缩小" className="w-5">
                    <svg className="ml-2" width="12" height="4" viewBox="0 0 12 4"><path d="M0 1h12v2H0z" fill="#222" /></svg>
                </Btn>
            </div>
            {/* input method toolbar */}
            <div className="absolute right-0 -top-2.5 w-[253px] h-[42px] bg-white border border-[#c4c4c4] flex items-center justify-between pl-1.5 pr-2.5 text-[#4f7cff]">
                <svg width="34" height="34" viewBox="0 0 34 34" fill="none">
                    <circle cx="17" cy="17" r="15" stroke="#4f7cff" strokeWidth="3" />
                    <text x="17" y="21" textAnchor="middle" fontSize="11" fontWeight="800" fill="#4f7cff">iFLY</text>
                </svg>
                <span className="text-2xl font-black">英</span>
                <svg width="20" height="24" viewBox="0 0 20 24" fill="#4f7cff"><circle cx="6" cy="6" r="5.500" /><path d="M15 11c3 0 5 3 4 6-1 4-4 6-7 7v-2c2-1 3-2 3-4-5-1-4-7 0-7z" /></svg>
                <svg width="20" height="26" viewBox="0 0 20 26" fill="#4f7cff"><rect x="5" y="0" width="10" height="17" rx="5" /><path d="M1 10c0 13 18 13 18 0" fill="none" stroke="#4f7cff" strokeWidth="2.500" /><path d="M8 19h4v6H8z" /></svg>
                <svg width="20" height="24" viewBox="0 0 20 24" fill="#4f7cff"><circle cx="10" cy="6" r="6" /><path d="M0 23c0-12 20-12 20 0z" /></svg>
                <svg width="24" height="24" viewBox="0 0 24 24" fill="#4f7cff"><path d="M1 1h10v10H1zM1 14h10v10H1zM14 14h9v10h-9zM18.500 0L24 6l-5.500 6L13 6z" /></svg>
                <span className="absolute right-3 bottom-1 text-[13px] leading-4 text-[#777] font-['Liberation_Sans',sans-serif]">CSDN @Mr_suyi</span>
            </div>
        </footer>
    );
}

export default function App() {
    return (
        <div className={`relative flex flex-col h-screen overflow-hidden bg-[#efefef] ${UI}`}>
            <TitleBar />
            <MenuBar />
            <Ribbon />
            <FormulaBar />
            <Sheet />
            <SheetTabs />
            <StatusBar />
            {/* floating side handle */}
            <div className="absolute right-0 top-[281px] w-[13px] h-[76px] rounded-full border-[3px] border-[#777] bg-[#f2f2f2] flex items-end">
                <span className="w-full h-9 rounded-full bg-linear-to-b from-[#6cbcff] to-[#3d84ff]" />
            </div>
        </div>
    );
}
